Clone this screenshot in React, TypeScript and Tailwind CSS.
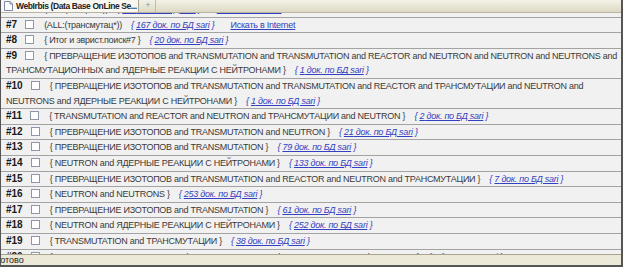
import React from "react";

type Query = { n: number; q: string; count?: number; web?: boolean };

const QUERIES: Query[] = [
  { n: 6, q: "(ALL:(нейтрон*))", count: 931, web: true },
  { n: 7, q: "(ALL:(трансмутац*))", count: 167, web: true },
  { n: 8, q: "{ Итог и эврист.поиск#7 }", count: 20 },
  {
    n: 9,
    q: "{ ПРЕВРАЩЕНИЕ ИЗОТОПОВ and TRANSMUTATION and TRANSMUTATION and REACTOR and NEUTRON and NEUTRON and NEUTRONS and ТРАНСМУТАЦИОННЫХ and ЯДЕРНЫЕ РЕАКЦИИ С НЕЙТРОНАМИ }",
    count: 1,
  },
  {
    n: 10,
    q: "{ ПРЕВРАЩЕНИЕ ИЗОТОПОВ and TRANSMUTATION and TRANSMUTATION and REACTOR and ТРАНСМУТАЦИИ and NEUTRON and NEUTRONS and ЯДЕРНЫЕ РЕАКЦИИ С НЕЙТРОНАМИ }",
    count: 1,
  },
  { n: 11, q: "{ TRANSMUTATION and REACTOR and NEUTRON and ТРАНСМУТАЦИИ and NEUTRON }", count: 2 },
  { n: 12, q: "{ ПРЕВРАЩЕНИЕ ИЗОТОПОВ and TRANSMUTATION and NEUTRON }", count: 21 },
  { n: 13, q: "{ ПРЕВРАЩЕНИЕ ИЗОТОПОВ and TRANSMUTATION }", count: 79 },
  { n: 14, q: "{ NEUTRON and ЯДЕРНЫЕ РЕАКЦИИ С НЕЙТРОНАМИ }", count: 133 },
  {
    n: 15,
    q: "{ ПРЕВРАЩЕНИЕ ИЗОТОПОВ and TRANSMUTATION and REACTOR and NEUTRON and ТРАНСМУТАЦИИ }",
    count: 7,
  },
  { n: 16, q: "{ NEUTRON and NEUTRONS }", count: 253 },
  { n: 17, q: "{ ПРЕВРАЩЕНИЕ ИЗОТОПОВ and TRANSMUTATION }", count: 61 },
  { n: 18, q: "{ NEUTRON and ЯДЕРНЫЕ РЕАКЦИИ С НЕЙТРОНАМИ }", count: 252 },
  { n: 19, q: "{ TRANSMUTATION and ТРАНСМУТАЦИИ }", count: 38 },
  { n: 20, q: "{ ПРЕВРАЩЕНИЕ ИЗОТОПОВ and TRANSMUTATION and ТРАНСМУТАЦИИ and NEUTRON }", count: 4 },
];

function PageIcon() {
  return (
    <svg width="9" height="10" viewBox="0 0 9 10" aria-hidden="true" className="shrink-0">
      <path d="M0.5 0.5h5.5l2.5 2.5v6.5h-8z" fill="#fff" stroke="#7a8aa8" />
      <path d="M6 0.5v2.5h2.5" fill="none" stroke="#7a8aa8" />
    </svg>
  );
}

function Row({ item }: { item: Query }) {
  return (
    <div className="border-t border-[#a3a3a3] bg-[#f1f1f1] pl-[5px] pr-[4px] leading-[14.6px] text-[#3a3a3a] tracking-[-0.25px]">
      <b className="text-[10px] tracking-normal text-[#1a1a1a]">#{item.n}</b>
      <span className="inline-block w-[9px] h-[9px] ml-[8px] mr-[10px] align-[-1px] border border-[#8c98a8] bg-white" />
      <span>{item.q}</span>
      {item.count !== undefined && (
        <span className="ml-[9px] italic text-[#3340c0]">
          {"{ "}
          <span className="underline">{item.count} док. по БД sari</span>
          {" }"}
        </span>
      )}
      {item.web && (
        <span className="ml-[16px] text-[#3340c0] underline">Искать в Internet</span>
      )}
    </div>
  );
}

export default function App() {
  return (
    <div className="w-[623px] h-[267px] overflow-hidden bg-[#ece9d8] font-['Liberation_Sans',Arial,sans-serif] text-[9px] border-l border-r-2 border-[#555]">
      {/* tab strip */}
      <div className="h-[13px] flex items-stretch bg-gradient-to-b from-[#f4f2e8] to-[#ddd9c3] border-b border-[#b8b4a0]">
        <div className="w-[138px] flex items-center gap-[3px] pl-[3px] bg-[#f8f7f2] border-r border-[#a8a48e] overflow-hidden">
          <PageIcon />
          <span className="font-bold text-[8.5px] text-[#222] whitespace-nowrap tracking-[-0.4px]">
            WebIrbis (Data Base OnLine Se...
          </span>
        </div>
        <div className="w-[15px] ml-[2px] flex items-center justify-center text-[#999] border-r border-[#c0bca8]">
          +
        </div>
      </div>

      {/* history list, scrolled */}
      <div className="h-[241px] overflow-hidden bg-white">
        <div className="-mt-[12px]">
          {QUERIES.map((item) => (
            <Row key={item.n} item={item} />
          ))}
        </div>
      </div>

      {/* status bar */}
      <div className="h-[13px] border-t border-[#a8a48e] border-b-2 border-b-[#555] overflow-hidden leading-[11px] text-[#222]">
        <span className="-ml-[5px]">Готово</span>
      </div>
    </div>
  );
}
